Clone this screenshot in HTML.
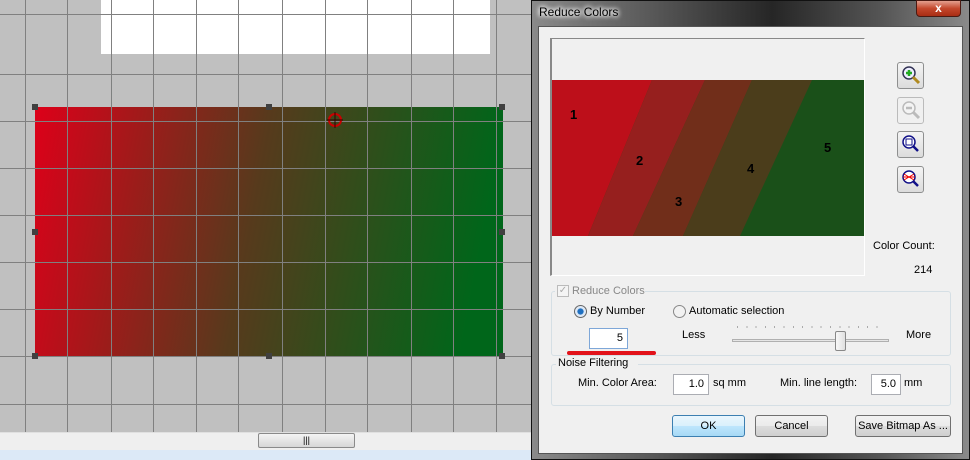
<!DOCTYPE html>
<html><head><style>
*{margin:0;padding:0;box-sizing:border-box}
body{width:970px;height:460px;overflow:hidden;position:relative;font-family:"Liberation Sans",sans-serif;font-size:11px;background:#c0c0c0}
.a{position:absolute}
.t{position:absolute;font-size:11px;color:#000;white-space:nowrap}
.btn{position:absolute;border:1px solid #707070;border-radius:3px;background:linear-gradient(#f2f2f2,#ebebeb 50%,#dddddd 50%,#cfcfcf);text-align:center;font-size:11px;line-height:20px;white-space:nowrap}
.inp{position:absolute;background:#fff;border:1px solid #abadb3;text-align:right;padding-right:4px;font-size:11px;line-height:19px}
.grp{position:absolute;border:1px solid #d5dfe5;border-radius:3px}
.ib{position:absolute;width:27px;height:27px;border:1px solid #8e8f8f;border-radius:3px;background:linear-gradient(#f4f4f4,#dcdcdc)}
</style></head><body>
<svg class="a" style="left:0;top:0" width="531" height="432">
<rect width="531" height="432" fill="#c0c0c0"/>
<rect x="101" y="0" width="389" height="54" fill="#fff"/>
<defs><linearGradient id="g" x1="0" x2="1" y1="0" y2="0.1"><stop offset="0" stop-color="#dd0019"/><stop offset="0.5" stop-color="#573a1c"/><stop offset="1" stop-color="#00661a"/></linearGradient></defs>
<rect x="35" y="107" width="468" height="249" fill="url(#g)"/>
<g stroke="#808080" stroke-width="1">
<path d="M25.5 0V432M67.5 0V432M111.5 0V432M153.5 0V432M196.5 0V432M238.5 0V432M282.5 0V432M325.5 0V432M367.5 0V432M411.5 0V432M453.5 0V432M496.5 0V432"/>
<path d="M0 14.5H531M0 74.5H531M0 121.5H531M0 168.5H531M0 215.5H531M0 262.5H531M0 309.5H531M0 356.5H531M0 404.5H531"/>
</g>
<g fill="#404040"><rect x="32" y="104" width="6" height="6"/><rect x="266" y="104" width="6" height="6"/><rect x="499" y="104" width="6" height="6"/><rect x="32" y="229" width="6" height="6"/><rect x="499" y="229" width="6" height="6"/><rect x="32" y="353" width="6" height="6"/><rect x="266" y="353" width="6" height="6"/><rect x="499" y="353" width="6" height="6"/></g>
<circle cx="335" cy="120" r="6" fill="none" stroke="#c00" stroke-width="2"/><path d="M327 120H343M335 112V128" stroke="#300" stroke-width="1"/>
</svg>
<div class="a" style="left:0;top:432px;width:531px;height:18px;background:#efefef;border-top:1px solid #e0e0e0"></div>
<div class="a" style="left:258px;top:433px;width:97px;height:15px;border:1px solid #8a8a8a;border-radius:2px;background:linear-gradient(#f4f4f4,#d6d6d6);font-size:9px;text-align:center;line-height:13px">|||</div>
<div class="a" style="left:0;top:450px;width:531px;height:10px;background:#dce9f7"></div>
<!-- dialog frame -->
<div class="a" style="left:531px;top:0;width:439px;height:460px;background:linear-gradient(90deg,#8a8a8a,#4a4a4a 35%,#262626 55%,#555 80%,#8a8a8a);border:1px solid #111"></div>
<div class="t" style="left:539px;top:5px;font-size:12px;color:#000;text-shadow:0 0 6px #fff,0 0 6px #fff,0 0 4px #fff">Reduce Colors</div>
<div class="a" style="left:916px;top:0;width:45px;height:17px;background:linear-gradient(#e4a08f,#c4472c 50%,#a82d14);border:1px solid #4b1a12;border-radius:0 0 4px 4px;color:#fff;font-weight:bold;text-align:center;font-size:12px;line-height:15px">x</div>
<div class="a" style="left:538px;top:26px;width:425px;height:428px;background:#f0f0f0;border:1px solid #555"></div>
<!-- preview -->
<div class="a" style="left:550px;top:38px;width:315px;height:238px;background:#f0f0f0;border-top:1px solid #888;border-left:2px solid #888;border-right:1px solid #fff;border-bottom:1px solid #fff"></div>
<svg class="a" style="left:552px;top:80px" width="312" height="156">
<rect width="312" height="156" fill="#1a5019"/>
<polygon points="0,0 100,0 36,156 0,156" fill="#bd0f1a"/>
<polygon points="100,0 153,0 81,156 36,156" fill="#961f1e"/>
<polygon points="153,0 200,0 131,156 81,156" fill="#712e1a"/>
<polygon points="200,0 260,0 188,156 131,156" fill="#4b3d1b"/>
<g font-family="Liberation Sans" font-weight="bold" font-size="13" fill="#000">
<text x="18" y="39">1</text><text x="84" y="85">2</text><text x="123" y="126">3</text><text x="195" y="93">4</text><text x="272" y="72">5</text></g>
</svg>
<!-- zoom buttons -->
<div class="ib" style="left:897px;top:62px"><svg width="25" height="25"><circle cx="11" cy="10" r="6" fill="#eef" stroke="#335" stroke-width="1.5"/><path d="M15 14l6 6" stroke="#b08a20" stroke-width="3"/><path d="M8 10h6M11 7v6" stroke="#2a2" stroke-width="2.5"/></svg></div>
<div class="ib" style="left:897px;top:97px;border-color:#bbb;background:#f0f0f0"><svg width="25" height="25"><circle cx="11" cy="10" r="6" fill="#f4f4f4" stroke="#bbb" stroke-width="1.5"/><path d="M15 14l6 6" stroke="#bbb" stroke-width="3"/><path d="M8 10h6" stroke="#bbb" stroke-width="2.5"/></svg></div>
<div class="ib" style="left:897px;top:131px"><svg width="25" height="25"><circle cx="11" cy="10" r="6" fill="#fff" stroke="#118" stroke-width="1.5"/><rect x="8" y="7" width="6" height="6" fill="none" stroke="#118"/><path d="M15 14l5 5" stroke="#118" stroke-width="2.5"/></svg></div>
<div class="ib" style="left:897px;top:166px"><svg width="25" height="25"><circle cx="11" cy="10" r="6" fill="#fff" stroke="#118" stroke-width="1.5"/><path d="M6 7l10 6M6 13l10-6M5 10h12" stroke="#e00" stroke-width="1"/><path d="M15 14l5 5" stroke="#118" stroke-width="2.5"/></svg></div>
<div class="t" style="left:873px;top:240px">Color Count:</div>
<div class="t" style="left:914px;top:264px">214</div>
<!-- reduce colors group -->
<div class="grp" style="left:551px;top:291px;width:400px;height:65px"></div>
<div class="a" style="left:555px;top:284px;width:90px;height:14px;background:#f0f0f0"></div>
<div class="a" style="left:557px;top:285px;width:12px;height:12px;border:1px solid #bbb;background:#f4f4f4;color:#aaa;font-size:10px;line-height:10px;text-align:center">✓</div>
<div class="t" style="left:572px;top:285px;color:#888">Reduce Colors</div>
<div class="a" style="left:574px;top:305px;width:13px;height:13px;border-radius:50%;border:1px solid #666;background:radial-gradient(#1f6fc0 35%,#dfe9f5 45%)"></div>
<div class="t" style="left:590px;top:305px">By Number</div>
<div class="a" style="left:673px;top:305px;width:13px;height:13px;border-radius:50%;border:1px solid #888;background:#f2f2f2"></div>
<div class="t" style="left:689px;top:305px">Automatic selection</div>
<div class="inp" style="left:589px;top:328px;width:39px;height:21px;border-color:#7ea7d8">5</div>
<div class="a" style="left:567px;top:351px;width:89px;height:4px;background:#e2121a;border-radius:2px"></div>
<div class="t" style="left:682px;top:329px">Less</div>
<div class="t" style="left:906px;top:329px">More</div>
<div class="a" style="left:737px;top:326px;width:149px;height:2px;background:repeating-linear-gradient(90deg,#aaa 0 1px,transparent 1px 9.3px)"></div>
<div class="a" style="left:732px;top:339px;width:157px;height:3px;border:1px solid #b0b0b0;background:#e6e6e6"></div>
<div class="a" style="left:835px;top:331px;width:11px;height:20px;border:1px solid #888;border-radius:2px;background:linear-gradient(90deg,#f8f8f8,#e0e0e0)"></div>
<!-- noise group -->
<div class="grp" style="left:551px;top:364px;width:400px;height:42px"></div>
<div class="a" style="left:556px;top:357px;width:82px;height:14px;background:#f0f0f0"></div>
<div class="t" style="left:558px;top:357px">Noise Filtering</div>
<div class="t" style="left:578px;top:377px">Min. Color Area:</div>
<div class="inp" style="left:673px;top:374px;width:36px;height:21px">1.0</div>
<div class="t" style="left:713px;top:377px">sq mm</div>
<div class="t" style="left:780px;top:377px">Min. line length:</div>
<div class="inp" style="left:871px;top:374px;width:30px;height:21px">5.0</div>
<div class="t" style="left:904px;top:377px">mm</div>
<!-- buttons -->
<div class="btn" style="left:672px;top:415px;width:73px;height:22px;border-color:#3c7fb1;background:linear-gradient(#eaf6fd,#d9f0fc 50%,#bee6fd 50%,#a7d9f5)">OK</div>
<div class="btn" style="left:755px;top:415px;width:73px;height:22px">Cancel</div>
<div class="btn" style="left:855px;top:415px;width:96px;height:22px">Save Bitmap As ...</div>
</body></html>
